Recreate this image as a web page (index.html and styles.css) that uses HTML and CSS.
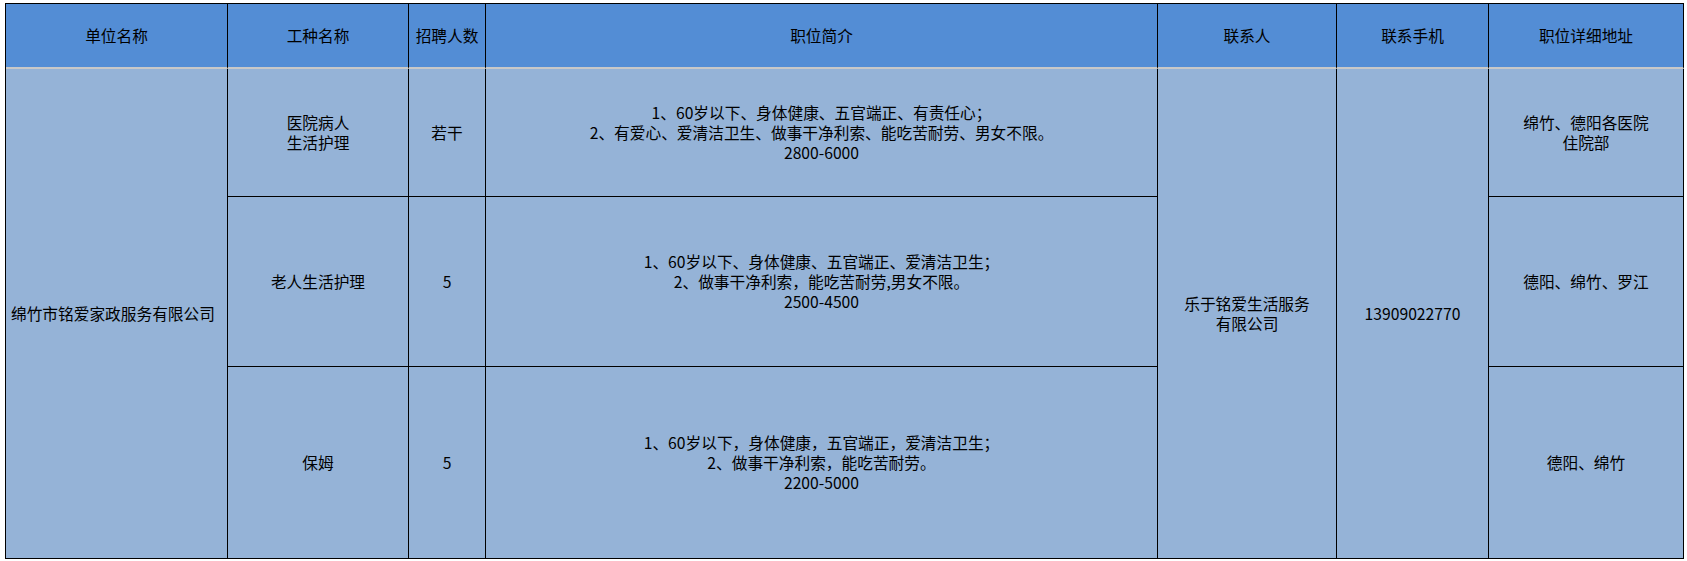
FILE: index.html
```html
<!DOCTYPE html>
<html lang="zh-CN">
<head>
<meta charset="utf-8">
<title>招聘信息</title>
<link rel="stylesheet" href="styles.css">
</head>
<body>
<div class="sheet">
  <div class="cell head">单位名称</div>
  <div class="cell head">工种名称</div>
  <div class="cell head">招聘人数</div>
  <div class="cell head">职位简介</div>
  <div class="cell head">联系人</div>
  <div class="cell head">联系手机</div>
  <div class="cell head">职位详细地址</div>

  <div class="cell span3 left">绵竹市铭爱家政服务有限公司</div>
  <div class="cell">医院病人<br>生活护理</div>
  <div class="cell">若干</div>
  <div class="cell">1、60岁以下、身体健康、五官端正、有责任心；<br>2、有爱心、爱清洁卫生、做事干净利索、能吃苦耐劳、男女不限。<br>2800-6000</div>
  <div class="cell span3">乐于铭爱生活服务<br>有限公司</div>
  <div class="cell span3">13909022770</div>
  <div class="cell">绵竹、德阳各医院<br>住院部</div>

  <div class="cell">老人生活护理</div>
  <div class="cell">5</div>
  <div class="cell">1、60岁以下、身体健康、五官端正、爱清洁卫生；<br>2、做事干净利索，能吃苦耐劳,男女不限。<br>2500-4500</div>
  <div class="cell">德阳、绵竹、罗江</div>

  <div class="cell">保姆</div>
  <div class="cell">5</div>
  <div class="cell">1、60岁以下，身体健康，五官端正，爱清洁卫生；<br>2、做事干净利索，能吃苦耐劳。<br>2200-5000</div>
  <div class="cell">德阳、绵竹</div>
</div>
</body>
</html>
```
FILE: styles.css
```css
html, body {
  margin: 0;
  padding: 0;
  background: #ffffff;
}

.sheet {
  margin: 3px 0 0 5px;
  display: grid;
  grid-template-columns: 222px 181px 77px 672px 179px 152px 195px;
  grid-template-rows: 65px 128px 170px 192px;
  width: max-content;
  border-left: 1px solid #000;
  border-top: 1px solid #000;
  font-family: "Noto Sans CJK SC", "Noto Sans", sans-serif;
  font-size: 15.7px;
  line-height: 20px;
  color: #000;
}

.cell {
  box-sizing: border-box;
  border-right: 1px solid #000;
  border-bottom: 1px solid #000;
  background: #95b3d7;
  display: flex;
  align-items: center;
  justify-content: center;
  text-align: center;
  white-space: nowrap;
}

.head {
  background: #538dd5;
  border-bottom: 2px solid #c8c8c8;
}

.span3 {
  grid-row: span 3;
}

.left {
  justify-content: flex-start;
  text-align: left;
  padding-left: 5px;
}
```
